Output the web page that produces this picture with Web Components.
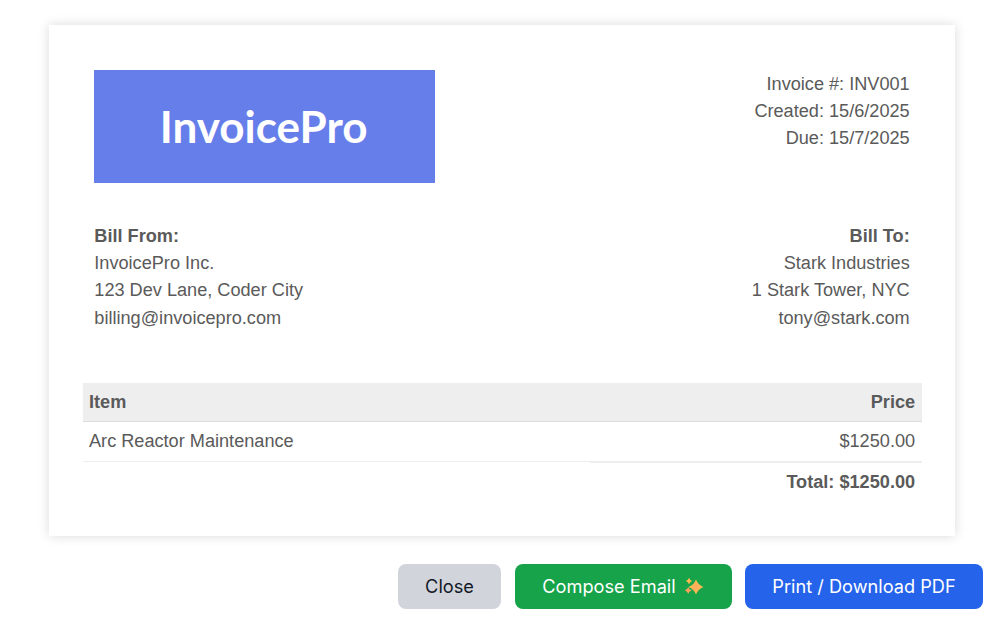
<!DOCTYPE html>
<html><head><meta charset="utf-8"><style>
html,body{margin:0;padding:0;background:#fff}
body{width:1005px;height:631px;overflow:hidden}
</style></head><body>
<invoice-modal>
  <invoice-card>
    <invoice-head></invoice-head>
    <invoice-parties></invoice-parties>
    <invoice-table></invoice-table>
  </invoice-card>
  <modal-actions></modal-actions>
</invoice-modal>
<template id="head"><style>
:host{display:flex;justify-content:space-between;align-items:flex-start;padding:0 11.8px 0 11px;margin-bottom:39.5px}
.logo{box-sizing:border-box;width:340.6px;height:113.3px;padding-right:2px;background:#667eea;color:#fff;font:700 44px/113px Lato,sans-serif;text-align:center}
.meta{text-align:right;padding-top:.5px}
</style><div class="logo">InvoicePro</div><div class="meta">Invoice #: INV001<br>Created: 15/6/2025<br>Due: 15/7/2025</div></template>
<template id="parties"><style>
:host{display:flex;justify-content:space-between;padding:0 11.8px 0 11px;margin-bottom:51px}
.r{text-align:right}b{font-weight:700}
</style><div><b>Bill From:</b><br>InvoicePro Inc.<br>123 Dev Lane, Coder City<br>billing@invoicepro.com</div><div class="r"><b>Bill To:</b><br>Stark Industries<br>1 Stark Tower, NYC<br>tony@stark.com</div></template>
<template id="table"><style>
:host{display:grid;grid-template-columns:507px 1fr}
div{padding:5.7px;height:27.3px}
.h{background:#eee;border-bottom:1px solid #ddd;font-weight:700;height:26.5px;padding-top:6px}
.c{border-bottom:1px solid #eee;padding-top:6px;height:27.3px}
.r{text-align:right;padding-right:6.4px}
.t{border-top:2px solid #eee;margin-top:-1px;font-weight:700;text-align:right;padding-top:5.7px;padding-right:6.4px}
</style><div class="h">Item</div><div class="h r">Price</div><div class="c">Arc Reactor Maintenance</div><div class="c r">$1250.00</div><div></div><div class="t">Total: $1250.00</div></template>
<template id="actions"><style>
:host{display:flex;justify-content:flex-end;gap:14px;margin-top:28px;padding-right:22px}
button{all:unset;box-sizing:border-box;height:45px;border-radius:8px;font:400 18.2px/45px Inter,sans-serif;text-align:center;display:flex;align-items:center;justify-content:center}
.a{width:103px;background:#d1d5db;color:#111827}
.b{width:217px;background:#16a34a;color:#fff}
.c{width:238px;background:#2563eb;color:#fff;margin-left:-1px}
svg{width:20px;height:20px;margin-left:9px}
</style><button class="a">Close</button><button class="b">Compose Email<svg viewBox="0 0 20 20"><defs><radialGradient id="g"><stop offset="0" stop-color="#ffa95e"/><stop offset="1" stop-color="#ffc14d"/></radialGradient></defs><path fill="url(#g)" d="M11 2.5Q13 8 18.5 10 13 12 11 17.5 9 12 3.5 10 9 8 11 2.5Z"/><path fill="#ffb84d" d="M4 .8Q4.8 3.2 7.2 4 4.8 4.8 4 7.2 3.2 4.8 .8 4 3.2 3.2 4 .8Z"/><path fill="#ff9f5a" d="M3.2 10Q4 12.6 6.6 13.4 4 14.2 3.2 16.8 2.4 14.2 -.2 13.4 2.4 12.6 3.2 10Z"/></svg></button><button class="c">Print / Download PDF</button></template>
<script>
function def(tag,tpl,css){customElements.define(tag,class extends HTMLElement{constructor(){super();const s=this.attachShadow({mode:'open'});
 if(tpl)s.appendChild(document.getElementById(tpl).content.cloneNode(true));else s.innerHTML='<style>'+css+'</style><slot></slot>';}});}
def('invoice-modal',null,':host{display:block;padding:24.5px 0 0 49px;box-sizing:border-box;width:1005px;height:631px}');
def('invoice-card',null,':host{display:block;box-sizing:border-box;width:906px;height:511.5px;padding:45.5px 33.5px 0 34.3px;background:#fff;box-shadow:0 0 11px rgba(0,0,0,.15);font:18.15px/27.3px "Liberation Sans",Arial,sans-serif;color:#5a5a5a}');
def('invoice-head','head');def('invoice-parties','parties');def('invoice-table','table');def('modal-actions','actions');
</script>
</body></html>
